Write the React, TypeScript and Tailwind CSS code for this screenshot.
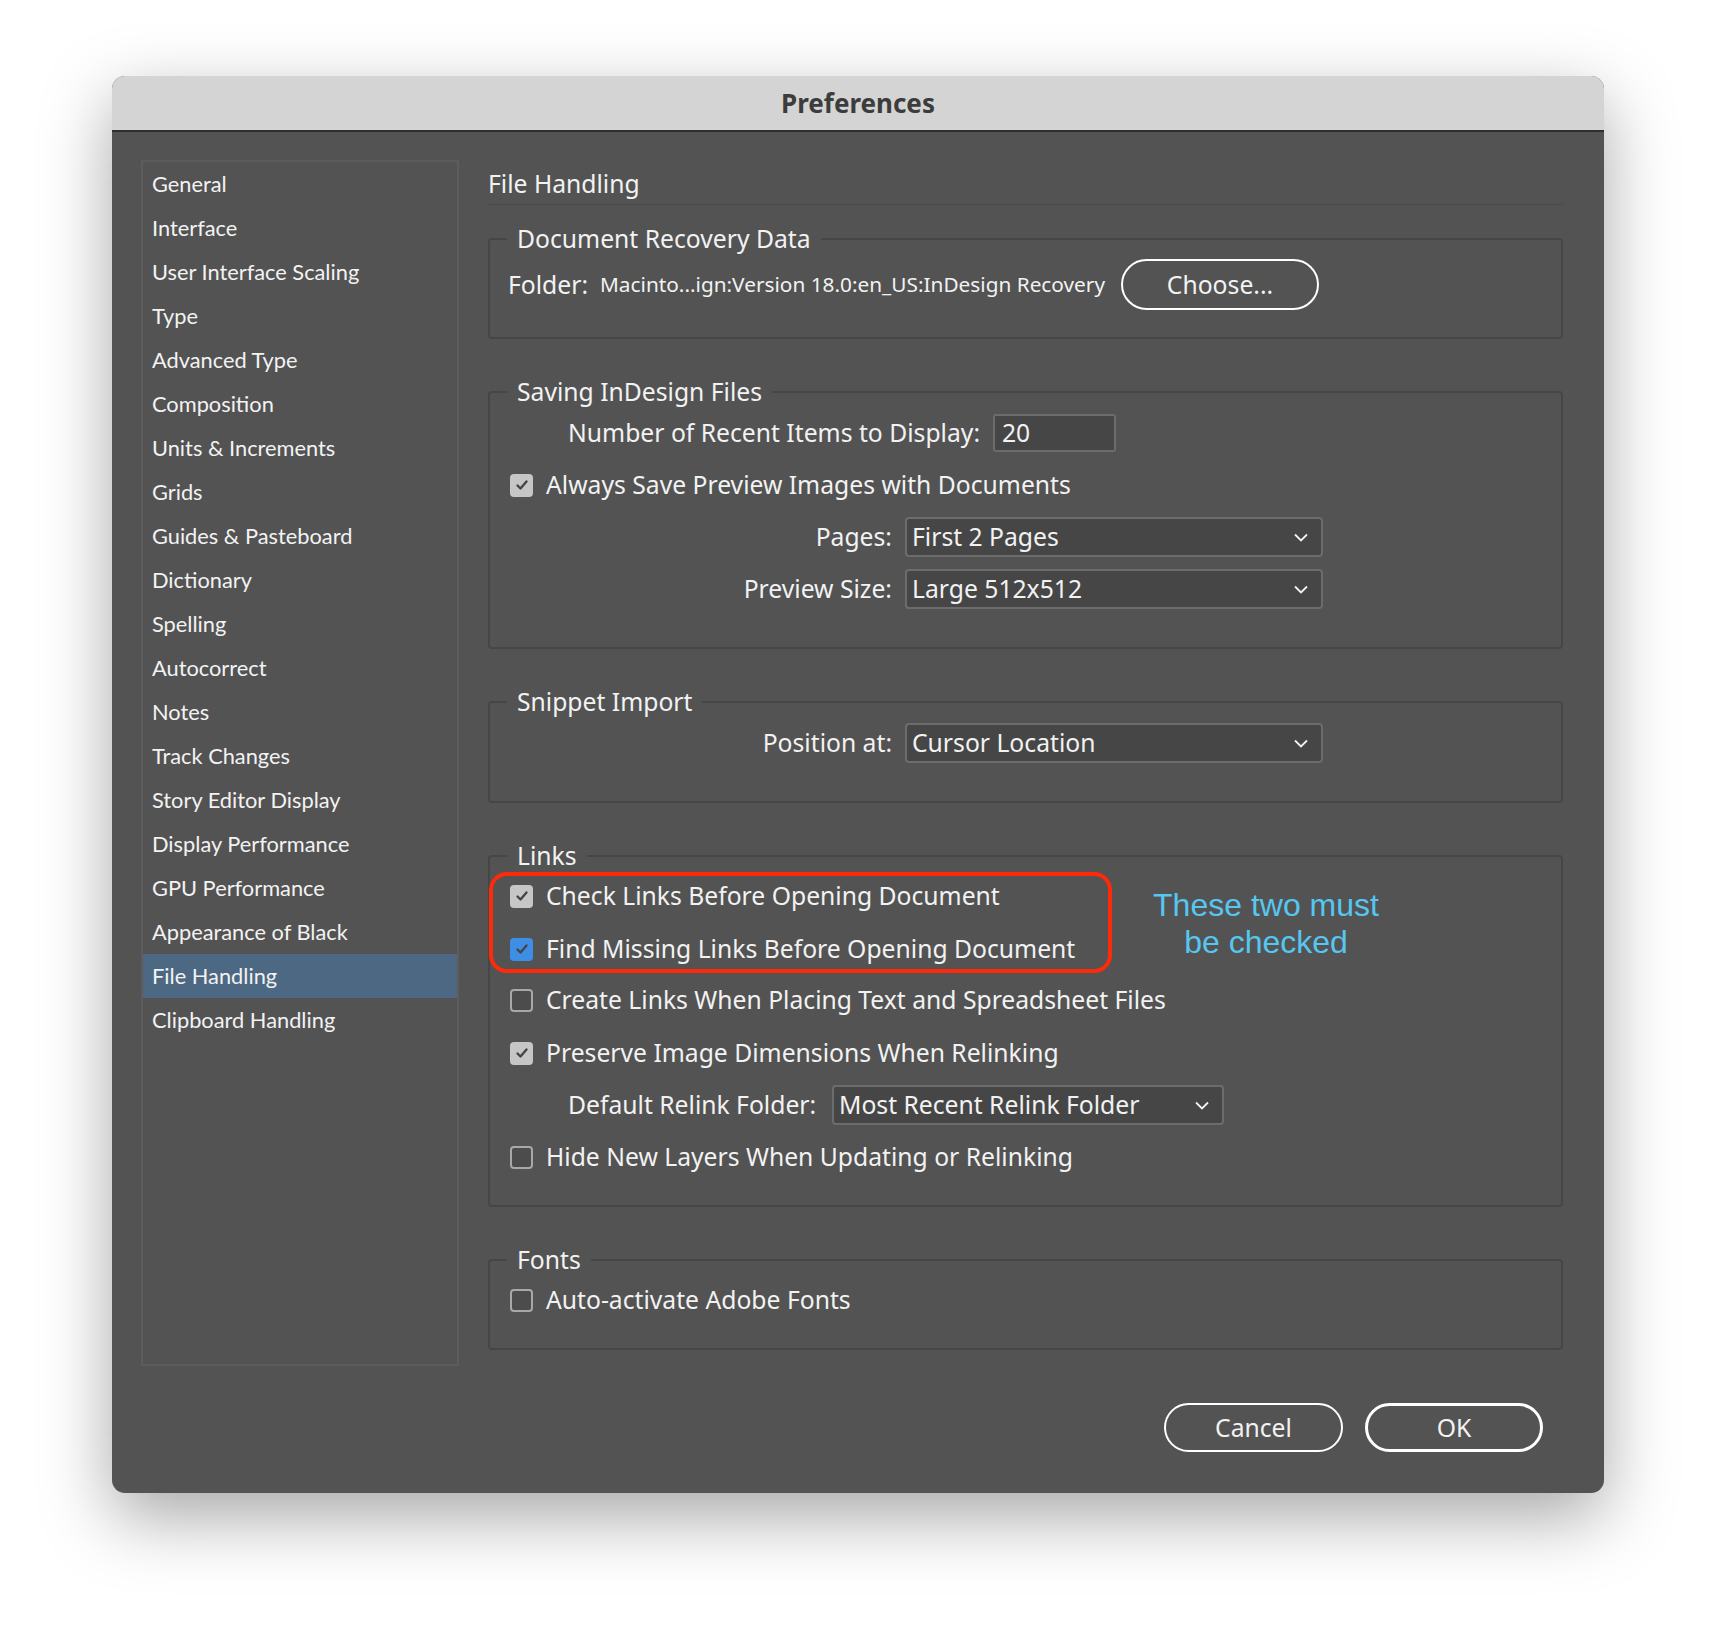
import type { ReactNode } from "react";

const NAV = [
  "General",
  "Interface",
  "User Interface Scaling",
  "Type",
  "Advanced Type",
  "Composition",
  "Units & Increments",
  "Grids",
  "Guides & Pasteboard",
  "Dictionary",
  "Spelling",
  "Autocorrect",
  "Notes",
  "Track Changes",
  "Story Editor Display",
  "Display Performance",
  "GPU Performance",
  "Appearance of Black",
  "File Handling",
  "Clipboard Handling",
];

function Check({ state }: { state: "on" | "off" | "blue" }) {
  if (state === "off") {
    return <span className="block w-[23px] h-[23px] shrink-0 rounded-[4px] border-2 border-[#a8a8a8] bg-[#4c4c4c]" />;
  }
  return (
    <span
      className={
        "flex w-[23px] h-[23px] shrink-0 items-center justify-center rounded-[4px] " +
        (state === "blue" ? "bg-[#3f8ee6]" : "bg-[#c6c6c6]")
      }
    >
      <svg width="16" height="16" viewBox="0 0 16 16" fill="none">
        <path d="M3.5 8.5l3 3 6-7" stroke="#454545" strokeWidth="2.4" strokeLinecap="round" strokeLinejoin="round" />
      </svg>
    </span>
  );
}

function CheckRow({ state, label, className = "" }: { state: "on" | "off" | "blue"; label: string; className?: string }) {
  return (
    <div className={"flex items-center h-[32px] pl-[20px] " + className}>
      <Check state={state} />
      <span className="ml-[13px]">{label}</span>
    </div>
  );
}

function Select({ value, w }: { value: string; w: string }) {
  return (
    <div className={"flex items-center h-[40px] rounded-[4px] border-2 border-[#6c6c6c] bg-[#464646] pl-[5px] pr-[13px] " + w}>
      <span className="flex-1">{value}</span>
      <svg width="14" height="9" viewBox="0 0 14 9" fill="none">
        <path d="M1 1.5l6 6 6-6" stroke="#f2f2f2" strokeWidth="1.8" />
      </svg>
    </div>
  );
}

function Group({ title, h, className = "", children }: { title: string; h: string; className?: string; children: ReactNode }) {
  return (
    <div className={"relative border-2 border-[#464646] rounded-[4px] " + h + " " + className}>
      <span className="absolute -top-[17px] left-[17px] px-[10px] bg-[#535353] text-[24.7px] leading-[32px]">{title}</span>
      {children}
    </div>
  );
}

export default function App() {
  return (
    <div className="w-[1716px] h-[1642px] bg-white pt-[76px] pl-[112px]">
      <div className="w-[1492px] h-[1417px] rounded-[13px] overflow-hidden flex flex-col bg-[#535353] shadow-[0_24px_70px_rgba(0,0,0,0.35)]">
        <div className="h-[56px] shrink-0 bg-[#d4d4d4] border-b-2 border-[#2e2e2e] flex items-center justify-center font-['Noto_Sans',sans-serif] text-[26px] font-bold text-[#3c3c3c]">
          Preferences
        </div>

        <div className="flex pl-[29px] pt-[28px] text-[#f2f2f2]">
          <nav className="w-[318px] h-[1206px] border-2 border-[#5c5c5c] flex flex-col font-['Lato',sans-serif] text-[21.8px]">
            {NAV.map((item) => (
              <div
                key={item}
                className={"h-[44px] shrink-0 flex items-center pl-[9px] " + (item === "File Handling" ? "bg-[#4d6882]" : "")}
              >
                {item}
              </div>
            ))}
          </nav>

          <div className="ml-[29px] w-[1075px] flex flex-col font-['Noto_Sans',sans-serif] text-[24.7px]">
            <div className="mt-[4px] h-[41px] flex items-center border-b border-[#484848]">File Handling</div>

            <Group title="Document Recovery Data" h="h-[101px]" className="mt-[33px]">
              <div className="flex items-center h-[51px] mt-[19px] pl-[18px]">
                <span className="w-[92px]">Folder:</span>
                <span className="w-[521px] text-[20.8px]">Macinto...ign:Version 18.0:en_US:InDesign Recovery</span>
                <button className="w-[198px] h-[51px] rounded-full border-2 border-white">Choose...</button>
              </div>
            </Group>

            <Group title="Saving InDesign Files" h="h-[258px]" className="mt-[52px]">
              <div className="flex flex-col pt-[21px]">
                <div className="flex items-center h-[38px] pl-[78px]">
                  <span className="w-[412px] text-right">Number of Recent Items to Display:</span>
                  <div className="ml-[13px] w-[123px] h-[38px] flex items-center rounded-[3px] border-2 border-[#6c6c6c] bg-[#464646] pl-[7px]">
                    20
                  </div>
                </div>
                <CheckRow state="on" label="Always Save Preview Images with Documents" className="mt-[17px]" />
                <div className="flex items-center mt-[16px]">
                  <span className="w-[402px] text-right">Pages:</span>
                  <div className="ml-[13px]">
                    <Select value="First 2 Pages" w="w-[418px]" />
                  </div>
                </div>
                <div className="flex items-center mt-[12px]">
                  <span className="w-[402px] text-right">Preview Size:</span>
                  <div className="ml-[13px]">
                    <Select value="Large 512x512" w="w-[418px]" />
                  </div>
                </div>
              </div>
            </Group>

            <Group title="Snippet Import" h="h-[102px]" className="mt-[52px]">
              <div className="flex items-center mt-[20px]">
                <span className="w-[402px] text-right">Position at:</span>
                <div className="ml-[13px]">
                  <Select value="Cursor Location" w="w-[418px]" />
                </div>
              </div>
            </Group>

            <Group title="Links" h="h-[352px]" className="mt-[52px]">
              <div className="flex flex-col pt-[23px]">
                <CheckRow state="on" label="Check Links Before Opening Document" />
                <CheckRow state="blue" label="Find Missing Links Before Opening Document" className="mt-[21px]" />
                <CheckRow state="off" label="Create Links When Placing Text and Spreadsheet Files" className="mt-[19px]" />
                <CheckRow state="on" label="Preserve Image Dimensions When Relinking" className="mt-[21px]" />
                <div className="flex items-center mt-[16px] pl-[78px]">
                  <span className="w-[251px]">Default Relink Folder:</span>
                  <div className="ml-[13px]">
                    <Select value="Most Recent Relink Folder" w="w-[392px]" />
                  </div>
                </div>
                <CheckRow state="off" label="Hide New Layers When Updating or Relinking" className="mt-[16px]" />
              </div>
              <div className="absolute -left-[1px] top-[15px] w-[623px] h-[101px] rounded-[18px] border-[4px] border-[#ff2a0a]" />
              <div className="absolute left-[656px] top-[30px] w-[240px] text-center font-['Liberation_Sans',Arial,sans-serif] text-[32px] leading-[37px] text-[#55c7f0]">
                These two must
                <br />
                be checked
              </div>
            </Group>

            <Group title="Fonts" h="h-[91px]" className="mt-[52px]">
              <CheckRow state="off" label="Auto-activate Adobe Fonts" className="mt-[23px]" />
            </Group>

            <div className="flex justify-end gap-[22px] mt-[53px] mr-[20px]">
              <button className="w-[179px] h-[49px] rounded-full border-2 border-white">Cancel</button>
              <button className="w-[178px] h-[49px] rounded-full border-[3px] border-white">OK</button>
            </div>
          </div>
        </div>
      </div>
    </div>
  );
}
